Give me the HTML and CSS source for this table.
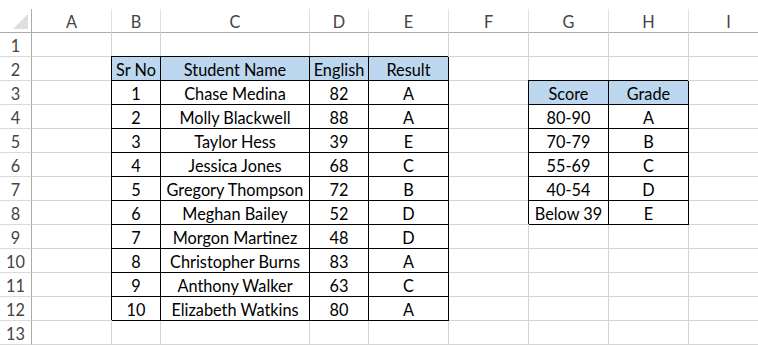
FILE: index.html
```html
<!DOCTYPE html>
<html>
<head>
<meta charset="utf-8">
<link rel="stylesheet" href="styles.css">
</head>
<body>
<div class="sheet">
  <div class="corner"><svg width="15" height="15" viewBox="0 0 15 15"><polygon points="15,0 15,15 0,15" fill="#dfdfdf"/></svg></div>
  <div class="ch">A</div><div class="ch">B</div><div class="ch">C</div><div class="ch">D</div><div class="ch">E</div><div class="ch">F</div><div class="ch">G</div><div class="ch">H</div><div class="ch">I</div>

  <div class="rh">1</div><div class="c"></div><div class="c"></div><div class="c"></div><div class="c"></div><div class="c"></div><div class="c"></div><div class="c"></div><div class="c"></div><div class="c"></div>

  <div class="rh">2</div><div class="c"></div><div class="c t th">Sr No</div><div class="c t th">Student Name</div><div class="c t th">English</div><div class="c t th">Result</div><div class="c"></div><div class="c"></div><div class="c"></div><div class="c"></div>

  <div class="rh">3</div><div class="c"></div><div class="c t">1</div><div class="c t">Chase Medina</div><div class="c t">82</div><div class="c t">A</div><div class="c"></div><div class="c t th">Score</div><div class="c t th">Grade</div><div class="c"></div>

  <div class="rh">4</div><div class="c"></div><div class="c t">2</div><div class="c t">Molly Blackwell</div><div class="c t">88</div><div class="c t">A</div><div class="c"></div><div class="c t">80-90</div><div class="c t">A</div><div class="c"></div>

  <div class="rh">5</div><div class="c"></div><div class="c t">3</div><div class="c t">Taylor Hess</div><div class="c t">39</div><div class="c t">E</div><div class="c"></div><div class="c t">70-79</div><div class="c t">B</div><div class="c"></div>

  <div class="rh">6</div><div class="c"></div><div class="c t">4</div><div class="c t">Jessica Jones</div><div class="c t">68</div><div class="c t">C</div><div class="c"></div><div class="c t">55-69</div><div class="c t">C</div><div class="c"></div>

  <div class="rh">7</div><div class="c"></div><div class="c t">5</div><div class="c t">Gregory Thompson</div><div class="c t">72</div><div class="c t">B</div><div class="c"></div><div class="c t">40-54</div><div class="c t">D</div><div class="c"></div>

  <div class="rh">8</div><div class="c"></div><div class="c t">6</div><div class="c t">Meghan Bailey</div><div class="c t">52</div><div class="c t">D</div><div class="c"></div><div class="c t">Below 39</div><div class="c t">E</div><div class="c"></div>

  <div class="rh">9</div><div class="c"></div><div class="c t">7</div><div class="c t">Morgon Martinez</div><div class="c t">48</div><div class="c t">D</div><div class="c"></div><div class="c"></div><div class="c"></div><div class="c"></div>

  <div class="rh">10</div><div class="c"></div><div class="c t">8</div><div class="c t">Christopher Burns</div><div class="c t">83</div><div class="c t">A</div><div class="c"></div><div class="c"></div><div class="c"></div><div class="c"></div>

  <div class="rh">11</div><div class="c"></div><div class="c t">9</div><div class="c t">Anthony Walker</div><div class="c t">63</div><div class="c t">C</div><div class="c"></div><div class="c"></div><div class="c"></div><div class="c"></div>

  <div class="rh">12</div><div class="c"></div><div class="c t">10</div><div class="c t">Elizabeth Watkins</div><div class="c t">80</div><div class="c t">A</div><div class="c"></div><div class="c"></div><div class="c"></div><div class="c"></div>

  <div class="rh">13</div><div class="c"></div><div class="c"></div><div class="c"></div><div class="c"></div><div class="c"></div><div class="c"></div><div class="c"></div><div class="c"></div><div class="c"></div>
</div>
</body>
</html>
```
FILE: styles.css
```css
html, body {
  margin: 0;
  padding: 0;
  background: #ffffff;
  overflow: hidden;
}
body {
  width: 758px;
  height: 345px;
  font-family: Lato, "Liberation Sans", sans-serif;
  font-size: 16.3px;
  color: #000;
}
.sheet {
  padding-top: 9px;
  display: grid;
  grid-template-columns: 32px 80px 49px 149px 59px 80px 80px 80px 80px 80px;
  grid-auto-rows: 24px;
}
.corner {
  border-right: 1px solid #ababab;
  border-bottom: 1px solid #ababab;
  display: flex;
  justify-content: flex-end;
  align-items: flex-end;
  padding: 0 3px 3px 0;
}
.corner svg {
  display: block;
}
.ch {
  border-right: 1px solid #e1e1e1;
  border-bottom: 1px solid #ababab;
  color: #444;
  display: flex;
  align-items: center;
  justify-content: center;
  padding-top: 1px;
}
.rh {
  border-right: 1px solid #ababab;
  border-bottom: 1px solid #dadada;
  color: #444;
  display: flex;
  align-items: center;
  justify-content: center;
  padding-top: 1px;
}
.c {
  border-right: 1px solid #d4d4d4;
  border-bottom: 1px solid #d4d4d4;
  display: flex;
  align-items: center;
  justify-content: center;
  white-space: nowrap;
  padding-top: 1px;
}
.t {
  border-right-color: #000;
  border-bottom-color: #000;
  box-shadow: -1px -1px 0 #000;
}
.th {
  background: #bdd7ee;
}
```
